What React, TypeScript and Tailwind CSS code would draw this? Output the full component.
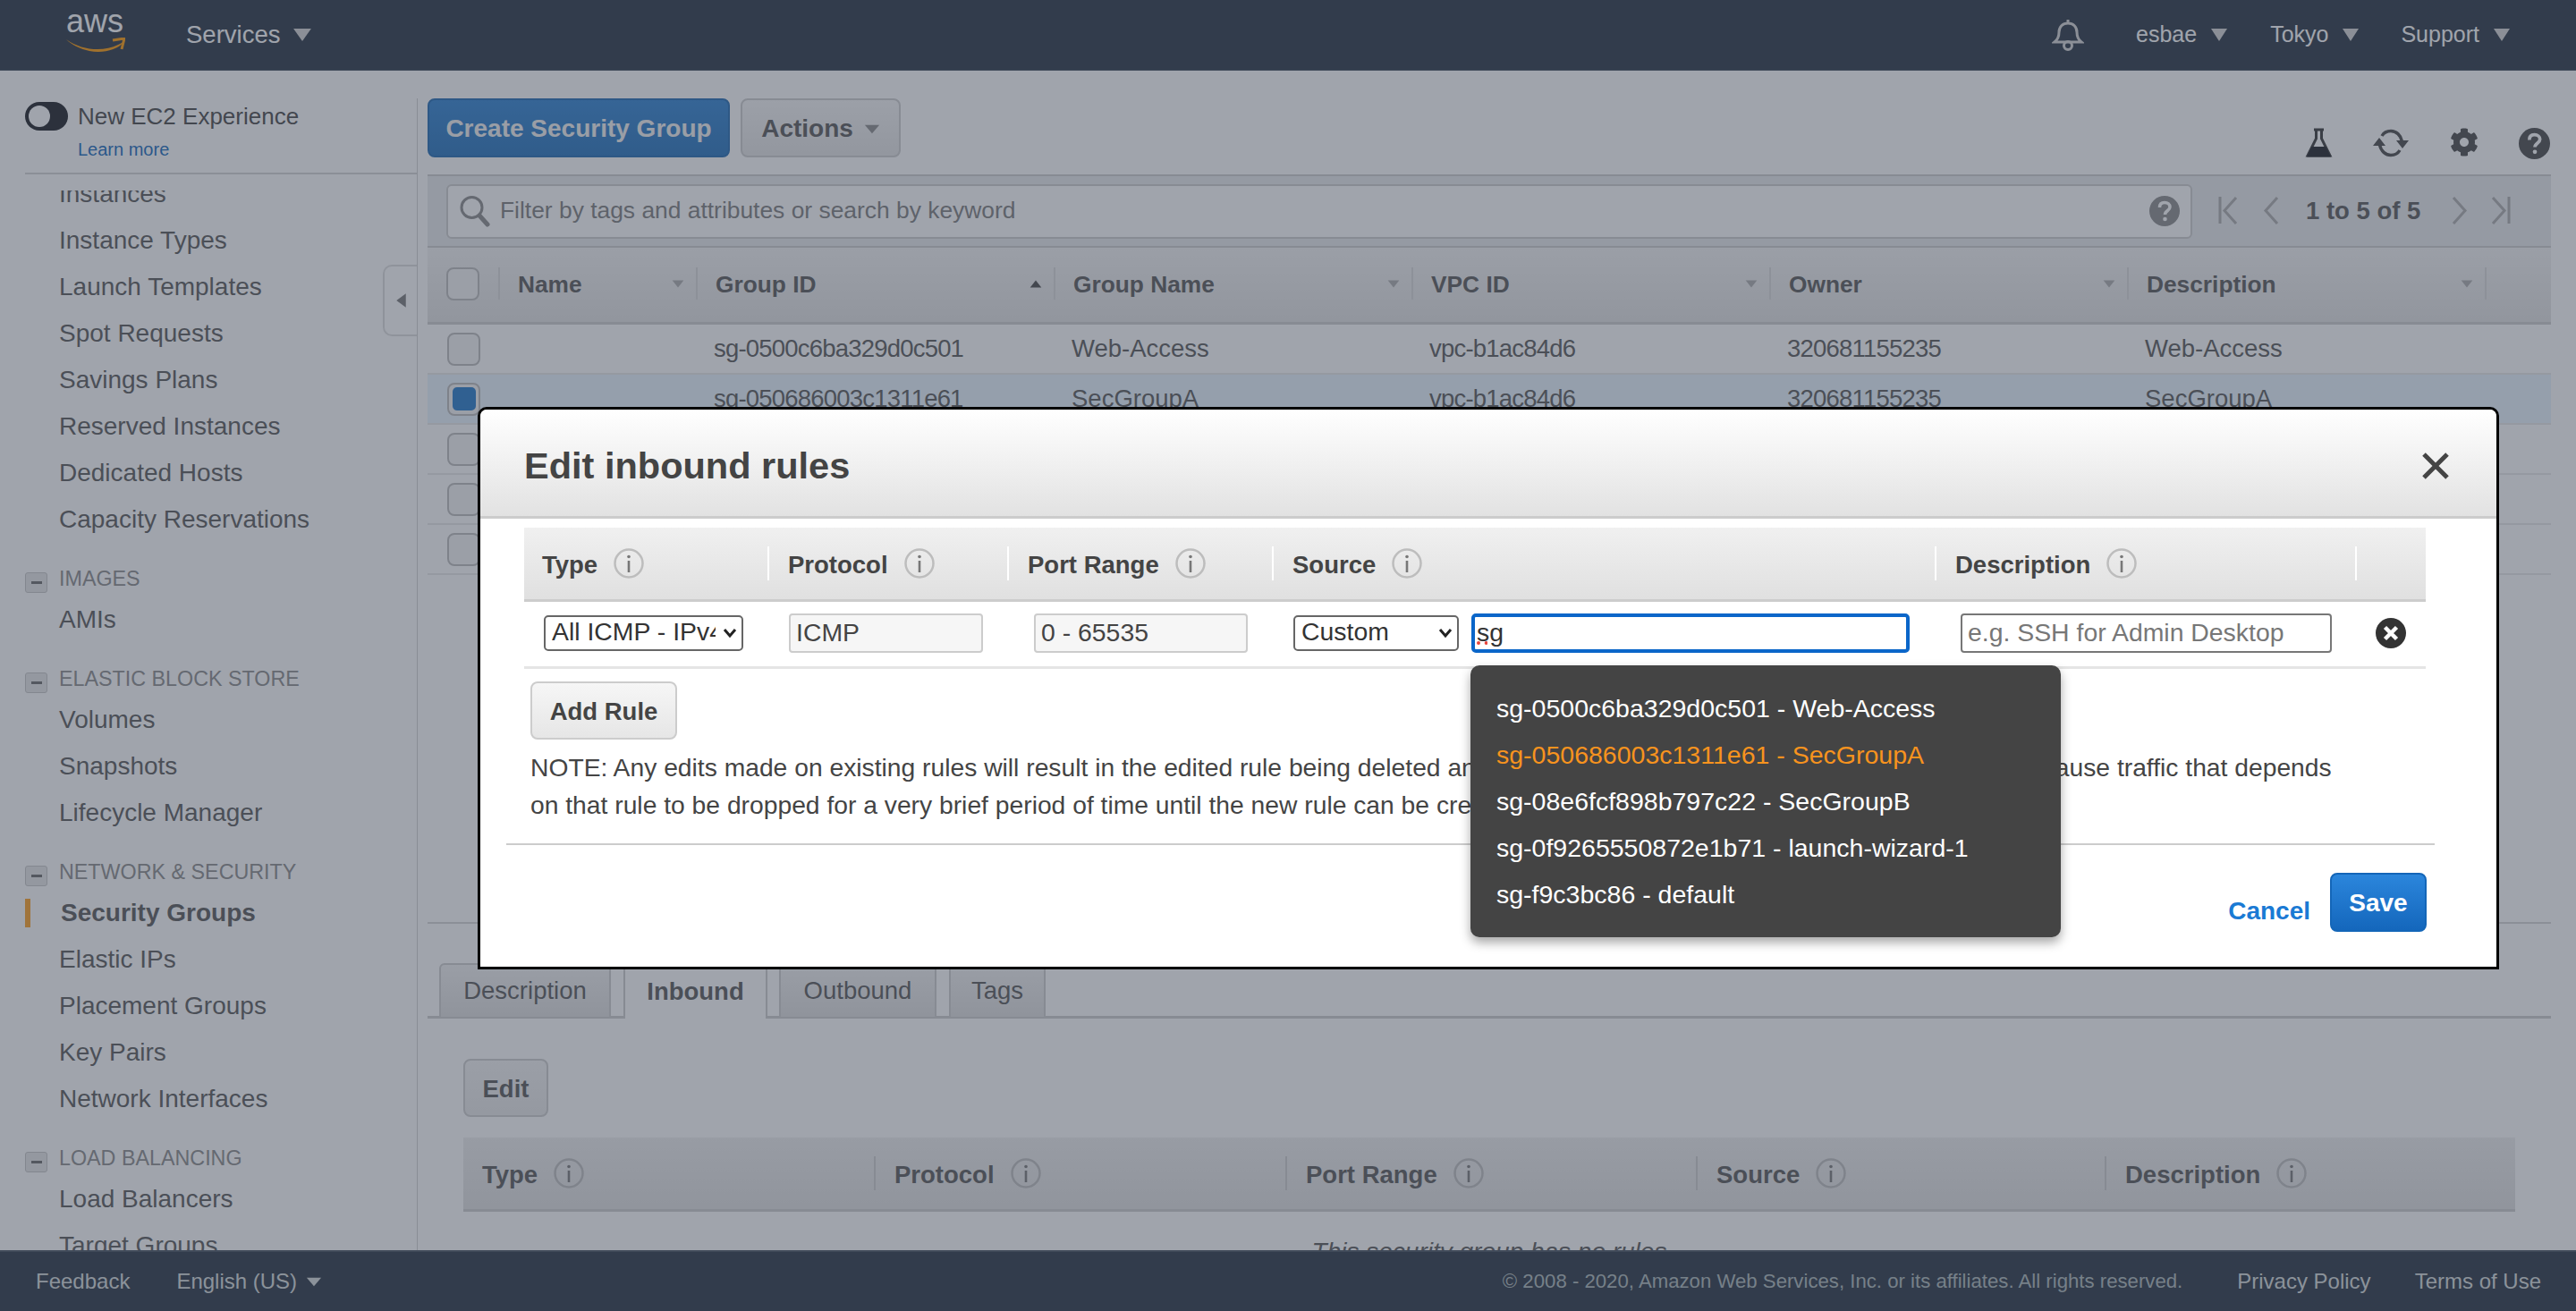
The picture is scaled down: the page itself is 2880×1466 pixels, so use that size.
import React from "react";
import { FaCog } from "react-icons/fa";

const Tri = ({ className = "", up = false }: { className?: string; up?: boolean }) => (
  <svg viewBox="0 0 20 16" className={className} fill="currentColor" preserveAspectRatio="none">
    <path d={up ? "M10 1 L19 15 H1 Z" : "M1 1 H19 L10 15 Z"} />
  </svg>
);

const Info = () => (
  <svg width="34" height="34" viewBox="0 0 34 34" className="shrink-0">
    <circle cx="17" cy="17" r="15.5" fill="none" stroke="#bdbdbd" strokeWidth="2.5" />
    <circle cx="17" cy="9.5" r="1.8" fill="#777" />
    <rect x="15.7" y="14" width="2.6" height="13" fill="#777" />
  </svg>
);

const Help = ({ size, fill }: { size: number; fill: string }) => (
  <svg width={size} height={size} viewBox="0 0 34 34">
    <circle cx="17" cy="17" r="17" fill={fill} />
    <path d="M11.5 13 C11.5 9 14 7.5 17 7.5 C20.5 7.5 23 9.5 23 12.5 C23 16.5 17.5 16.5 17.5 21" fill="none" stroke="#fff" strokeWidth="3.6" />
    <circle cx="17.5" cy="26" r="2.3" fill="#fff" />
  </svg>
);

const Chevron = () => (
  <svg width="16" height="12" viewBox="0 0 16 12" className="absolute right-[7px] top-[14px] pointer-events-none" fill="none" stroke="#222" strokeWidth="3">
    <path d="M2 2 L8 9 L14 2" />
  </svg>
);

const Check = ({ checked = false }: { checked?: boolean }) => (
  <div className="w-[37px] h-[37px] rounded-[8px] border-2 border-[#bbb] bg-[#f4f4f4] flex items-center justify-center">
    {checked && <div className="w-[26px] h-[26px] rounded-[5px] bg-[#1f76c8]" />}
  </div>
);

const sections = [
  { title: "IMAGES", items: ["AMIs"] },
  { title: "ELASTIC BLOCK STORE", items: ["Volumes", "Snapshots", "Lifecycle Manager"] },
  { title: "NETWORK & SECURITY", items: ["Security Groups", "Elastic IPs", "Placement Groups", "Key Pairs", "Network Interfaces"] },
  { title: "LOAD BALANCING", items: ["Load Balancers", "Target Groups"] },
];

const rows = [
  { id: "sg-0500c6ba329d0c501", name: "Web-Access" },
  { id: "sg-050686003c1311e61", name: "SecGroupA", selected: true },
  { id: "sg-08e6fcf898b797c22", name: "SecGroupB" },
  { id: "sg-0f9265550872e1b71", name: "launch-wizard-1" },
  { id: "sg-f9c3bc86", name: "default" },
];

const Sidebar = () => (
  <aside className="w-[466px] shrink-0 relative flex flex-col overflow-hidden">
    <div className="ml-[28px] h-[116px] shrink-0 border-b-2 border-[#d5d5d5]">
      <div className="flex items-center mt-[35px]">
        <div className="w-[48px] h-[32px] rounded-full bg-[#16191f] flex items-center pl-[4px]">
          <div className="w-[24px] h-[24px] rounded-full bg-white" />
        </div>
        <span className="ml-[11px] text-[26px] leading-[32px] text-[#444]">New EC2 Experience</span>
      </div>
      <div className="ml-[59px] mt-[7px] text-[20px] leading-[28px] text-[#1166bb]">Learn more</div>
    </div>
    {/* list scrolled a little: first row is cut by the top edge */}
    <div className="mt-[18px] flex-1 min-h-0 overflow-hidden text-[28px] text-[#555]">
      <div className="mt-[-22px]">
        {["Instances", "Instance Types", "Launch Templates", "Spot Requests", "Savings Plans", "Reserved Instances", "Dedicated Hosts", "Capacity Reservations"].map((t) => (
          <div key={t} className="h-[52px] pl-[66px] flex items-center">{t}</div>
        ))}
        {sections.map((s) => (
          <div key={s.title} className="mt-[20px]">
            <div className="h-[40px] flex items-center pl-[28px]">
              <div className="w-[25px] h-[23px] mt-[8px] rounded-[3px] border border-[#c4c4c4] bg-[#e6e6e6] flex items-center justify-center">
                <div className="w-[12px] h-[3px] bg-[#666]" />
              </div>
              <span className="ml-[13px] text-[23.3px] text-[#888]">{s.title}</span>
            </div>
            {s.items.map((t) =>
              t === "Security Groups" ? (
                <div key={t} className="h-[52px] flex items-center pl-[28px]">
                  <div className="w-[6px] h-[32px] bg-[#ff9f1c]" />
                  <span className="ml-[34px] font-bold">{t}</span>
                </div>
              ) : (
                <div key={t} className="h-[52px] pl-[66px] flex items-center">{t}</div>
              )
            )}
          </div>
        ))}
      </div>
    </div>
    <div className="absolute left-[428px] top-[217px] w-[38px] h-[80px] rounded-l-[10px] border-2 border-r-0 border-[#ddd] bg-white flex items-center justify-center">
      <Tri up className="w-[17px] h-[12px] -rotate-90 text-[#777]" />
    </div>
  </aside>
);

const colHead = ["Name", "Group ID", "Group Name", "VPC ID", "Owner", "Description"];

const SgTable = () => (
  <div>
    <div className="h-[86px] grid grid-cols-[79px_221px_400px_400px_400px_400px_400px_74px] items-center border-b-[3px] border-[#ccc] bg-gradient-to-b from-[#f4f4f4] to-[#e2e2e2]">
      <div className="pl-[21px] mt-[-3px]"><Check /></div>
      {colHead.map((c) => (
        <div key={c} className="h-[36px] mt-[-3px] border-l-2 border-[#d8d8d8] pl-[20px] pr-[13px] flex items-center justify-between text-[26.3px] font-bold text-[#555]">
          <span className="pt-[3px]">{c}</span>
          {c === "Group ID" ? <Tri up className="w-[14px] h-[9px] text-[#444]" /> : <Tri className="w-[14px] h-[9px] text-[#aaa]" />}
        </div>
      ))}
      <div className="h-[36px] mt-[-3px] border-l-2 border-[#d8d8d8]" />
    </div>
    {rows.map((r) => (
      <div key={r.id} className={`h-[56px] grid grid-cols-[79px_221px_400px_400px_400px_400px_400px_74px] items-center border-b-2 border-[#e8e8e8] text-[27.5px] text-[#555] ${r.selected ? "bg-[#e9f5ff]" : ""}`}>
        <div className="pl-[22px]"><Check checked={r.selected} /></div>
        <div />
        <div className="pl-[20px] tracking-[-0.8px]">{r.id}</div>
        <div className="pl-[20px]">{r.id === "sg-f9c3bc86" ? "" : r.name}</div>
        <div className="pl-[20px] tracking-[-0.8px]">vpc-b1ac84d6</div>
        <div className="pl-[20px] tracking-[-0.8px]">320681155235</div>
        <div className="pl-[20px]">{r.name}</div>
        <div />
      </div>
    ))}
  </div>
);

const MainPane = () => (
  <main className="flex-1 min-w-0 ml-[11px] mr-[28px] overflow-hidden">
    <div className="pt-[31px] h-[116px] flex items-start">
      <button className="w-[338px] h-[66px] rounded-[8px] border-2 border-[#1a66b0] bg-gradient-to-b from-[#2a80d2] to-[#1f6fbb] text-[28px] font-bold text-[#f2f2f2] pt-[2px]">Create Security Group</button>
      <button className="ml-[12px] w-[179px] h-[66px] rounded-[8px] border-2 border-[#ccc] bg-gradient-to-b from-[#f6f6f6] to-[#e4e4e4] text-[28px] font-bold text-[#555] flex items-center justify-center gap-[12px] pt-[2px]">
        Actions <Tri className="w-[18px] h-[11px] text-[#888]" />
      </button>
      <div className="ml-auto mt-[33px] flex items-start pr-[1px]">
        <svg width="31" height="34" viewBox="0 0 31 34">
          <path d="M10 2 H21 M12.5 2 V12 L3 31 H28 L18.5 12 V2" fill="none" stroke="#333" strokeWidth="3" />
          <path d="M7.5 21 H23.5 L29 32.5 H2 Z" fill="#16191f" />
        </svg>
        <svg width="42" height="34" viewBox="0 0 42 34" className="ml-[44px]" fill="none" stroke="#444" strokeWidth="3.5">
          <path d="M33.5 15 C32 8 27 3.5 21 3.5 C16.5 3.5 13 5.5 11 9" />
          <path d="M8.5 19 C10 26 15 30.5 21 30.5 C25.5 30.5 29 28.5 31 25" />
          <path d="M1 20 H15 L8 11 Z M27 14 H41 L34 23 Z" fill="#444" stroke="none" />
        </svg>
        <FaCog className="ml-[45px] text-[#444]" size={32} />
        <div className="ml-[45px]"><Help size={35} fill="#444" /></div>
      </div>
    </div>
    <div className="h-[82px] border-y-2 border-[#ccc] bg-[#e9eaec] flex items-center pl-[21px]">
      <div className="w-[1952px] h-[61px] rounded-[6px] border-2 border-[#ccc] bg-white flex items-center pl-[12px] pr-[12px]">
        <svg width="36" height="36" viewBox="0 0 36 36">
          <circle cx="14.5" cy="14" r="11.5" fill="none" stroke="#888" strokeWidth="3" />
          <path d="M23 23 L32 33" stroke="#888" strokeWidth="5" strokeLinecap="round" />
        </svg>
        <span className="ml-[10px] text-[26.4px] text-[#7a7a7a]">Filter by tags and attributes or search by keyword</span>
        <div className="ml-auto"><Help size={34} fill="#888" /></div>
      </div>
      <svg width="22" height="34" viewBox="0 0 22 34" className="ml-[29px] text-[#aaa]" fill="none" stroke="currentColor" strokeWidth="3">
        <path d="M2 1 V31 M20 2 L7 16.5 L20 31" />
      </svg>
      <svg width="18" height="34" viewBox="0 0 18 34" className="ml-[28px] text-[#aaa]" fill="none" stroke="currentColor" strokeWidth="3">
        <path d="M16 2 L3 16.5 L16 31" />
      </svg>
      <span className="ml-[30px] text-[27.5px] font-bold text-[#555] whitespace-nowrap">1 to 5 of 5</span>
      <svg width="18" height="34" viewBox="0 0 18 34" className="ml-[35px] text-[#aaa]" fill="none" stroke="currentColor" strokeWidth="3">
        <path d="M2 2 L15 16.5 L2 31" />
      </svg>
      <svg width="22" height="34" viewBox="0 0 22 34" className="ml-[26px] text-[#aaa]" fill="none" stroke="currentColor" strokeWidth="3">
        <path d="M20 1 V31 M2 2 L15 16.5 L2 31" />
      </svg>
    </div>
    <SgTable />
    <div className="mt-[388px] h-[2px] bg-[#d5d5d5]" />
    <div className="mt-[44px] h-[62px] flex items-stretch pl-[13px] border-b-[3px] border-[#ccc] text-[27.5px] text-[#555]">
      {[
        { t: "Description", w: "w-[192px]" },
        { t: "Inbound", w: "w-[161px] ml-[14px]", active: true },
        { t: "Outbound", w: "w-[176px] ml-[13px]" },
        { t: "Tags", w: "w-[108px] ml-[14px]" },
      ].map((tab) => (
        <div
          key={tab.t}
          className={`${tab.w} h-[62px] rounded-t-[6px] border-2 flex items-center justify-center ${
            tab.active ? "border-[#ccc] border-b-0 bg-white font-bold" : "border-[#ccc] bg-gradient-to-b from-[#f2f2f2] to-[#dedede]"
          }`}
        >
          {tab.t}
        </div>
      ))}
    </div>
    <div className="px-[40px]">
      <button className="mt-[45px] w-[95px] h-[65px] rounded-[8px] border-2 border-[#ccc] bg-gradient-to-b from-[#f4f4f4] to-[#e8e8e8] text-[27.5px] font-bold text-[#555] pt-[2px]">Edit</button>
      <div className="mt-[23px] h-[83px] grid grid-cols-[459px_460px_459px_457px_459px] items-center border-b-[3px] border-[#ccc] bg-gradient-to-b from-[#eeeeee] to-[#e0e0e0] text-[27.5px] font-bold text-[#555]">
        {["Type", "Protocol", "Port Range", "Source", "Description"].map((c, i) => (
          <div key={c} className={`h-[38px] flex items-center gap-[18px] pl-[21px] ${i ? "border-l-2 border-[#ccc]" : ""}`}>
            <span className="pt-[4px]">{c}</span> <Info />
          </div>
        ))}
      </div>
      <div className="mt-[24px] text-center text-[28px] italic text-[#555]">This security group has no rules</div>
    </div>
  </main>
);

const sgOptions = [
  "sg-0500c6ba329d0c501 - Web-Access",
  "sg-050686003c1311e61 - SecGroupA",
  "sg-08e6fcf898b797c22 - SecGroupB",
  "sg-0f9265550872e1b71 - launch-wizard-1",
  "sg-f9c3bc86 - default",
];

const inputCls = "h-[44px] rounded-[4px] text-[28.4px] px-[6px] text-[#444]";

const Modal = () => (
  <div className="absolute left-[534px] top-[455px] w-[2260px] h-[629px] border-[3px] border-black rounded-t-[10px] bg-white text-[#444]">
    <div className="h-[122px] rounded-t-[8px] border-b-[3px] border-[#ccc] bg-gradient-to-b from-white to-[#e2e2e2] flex items-center justify-between pl-[49px] pr-[53px]">
      <h2 className="text-[41.5px] font-bold text-[#444] pt-[8px]">Edit inbound rules</h2>
      <svg width="30" height="30" viewBox="0 0 30 30" stroke="#444" strokeWidth="5" className="mt-[6px]"><path d="M2 2 L28 28 M28 2 L2 28" /></svg>
    </div>
    <div className="ml-[49px] w-[2126px] mt-[10px]">
      <div className="h-[83px] grid grid-cols-[272px_268px_296px_741px_470px_79px] items-center border-b-[3px] border-[#ccc] bg-gradient-to-b from-[#f0f0f0] to-[#e0e0e0] text-[27.5px] font-bold text-[#444]">
        {["Type", "Protocol", "Port Range", "Source", "Description", ""].map((c, i) => (
          <div key={i} className={`h-[38px] flex items-center gap-[18px] ${i ? "border-l-2 border-white pl-[21px]" : "pl-[20px]"}`}>
            <span className="pt-[3px]">{c}</span> {c && <Info />}
          </div>
        ))}
      </div>
      <div className="h-[75px] pb-[3px] grid grid-cols-[272px_268px_296px_741px_470px_79px] items-center border-b-[3px] border-[#e5e5e5]">
        <div className="pl-[22px]">
          <div className="relative w-[223px]">
            <select defaultValue="all" className="block appearance-none w-full h-[40px] rounded-[5px] border-2 border-[#666] bg-white text-[28.4px] leading-[30px] pl-[7px] pr-[29px] pb-[4px] text-[#333]">
              <option value="all">All ICMP - IPv4</option>
            </select>
            <Chevron />
          </div>
        </div>
        <div className="pl-[24px]">
          <input readOnly value="ICMP" className={`${inputCls} w-[217px] border-2 border-[#ccc] bg-[#f6f6f6]`} />
        </div>
        <div className="pl-[30px]">
          <input readOnly value="0 - 65535" className={`${inputCls} w-[239px] border-2 border-[#ccc] bg-[#f6f6f6]`} />
        </div>
        <div className="pl-[24px] flex items-center gap-[14px]">
          <div className="relative w-[185px]">
            <select defaultValue="custom" className="block appearance-none w-full h-[40px] rounded-[5px] border-2 border-[#666] bg-white text-[28.4px] leading-[30px] pl-[7px] pr-[29px] pb-[4px] text-[#333]">
              <option value="custom">Custom</option>
            </select>
            <Chevron />
          </div>
          <div className="w-[490px] h-[44px] rounded-[5px] border-4 border-[#0b66c9] bg-white text-[28.4px] leading-[34px] pl-[2px] text-[#333]">
            <span className="underline decoration-dotted decoration-[#e8453c] decoration-[4px] underline-offset-[1px]">sg</span>
          </div>
        </div>
        <div className="pl-[29px]">
          <input readOnly placeholder="e.g. SSH for Admin Desktop" className={`${inputCls} w-[415px] border-2 border-[#777] bg-white placeholder:text-[#777]`} />
        </div>
        <div className="pl-[23px]">
          <svg width="34" height="34" viewBox="0 0 34 34">
            <circle cx="17" cy="17" r="17" fill="#333" />
            <path d="M10.5 10.5 L23.5 23.5 M23.5 10.5 L10.5 23.5" stroke="#fff" strokeWidth="4.5" />
          </svg>
        </div>
      </div>
    </div>
    <button className="ml-[56px] mt-[14px] w-[164px] h-[65px] rounded-[8px] border-2 border-[#ccc] bg-gradient-to-b from-[#f6f6f6] to-[#e6e6e6] text-[27.5px] font-bold text-[#444] pt-[2px]">Add Rule</button>
    <p className="ml-[56px] mt-[10px] text-[28.25px] leading-[42px] text-[#444] whitespace-nowrap">
      NOTE: Any edits made on existing rules will result in the edited rule being deleted and a new rule created with the new details. This will cause traffic that depends
      <br />
      on that rule to be dropped for a very brief period of time until the new rule can be created.
    </p>
    <div className="ml-[29px] mt-[22px] w-[2156px] h-[2px] bg-[#ccc]" />
    <div className="mt-[31px] mr-[78px] flex justify-end gap-[22px]">
      <button className="mt-[20px] text-[28px] font-bold text-[#1a7ad4]">Cancel</button>
      <button className="w-[108px] h-[66px] rounded-[8px] border-2 border-[#1466b8] bg-gradient-to-b from-[#2b86dc] to-[#1467bc] text-[28px] font-bold text-white pt-[1px]">Save</button>
    </div>
    <div className="absolute left-[1107px] top-[286px] w-[660px] h-[304px] rounded-[10px] bg-[#444] shadow-[0_6px_12px_rgba(0,0,0,0.35)] pt-[22px] pl-[29px] text-[28.5px] text-white">
      {sgOptions.map((o, i) => (
        <div key={o} className={`h-[52px] flex items-center ${i === 1 ? "text-[#f7931e]" : ""}`}>{o}</div>
      ))}
    </div>
  </div>
);

export default function App() {
  return (
    <div className="relative w-[2880px] h-[1466px] overflow-hidden flex flex-col bg-white font-['Liberation_Sans',Arial,sans-serif]">
      <header className="h-[79px] shrink-0 bg-[#232f3e] border-b border-[#3a4654] flex items-center text-[27.5px] text-white">
        <div className="ml-[74px] w-[64px] h-[44px] relative">
          <span className="absolute left-0 top-[-15px] text-[36px] leading-[44px] text-white">aws</span>
          <svg width="66" height="18" viewBox="0 0 66 18" className="absolute left-0 top-[25px]">
            <path d="M0 2 C18 15 42 16 58 8 L64 5 C58 14 40 18 26 15 C16 13 6 8 0 2 Z" fill="#ff9900" />
            <path d="M52 3 L65 1 L62 13" fill="none" stroke="#ff9900" strokeWidth="3" />
          </svg>
        </div>
        <span className="ml-[70px]">Services</span>
        <Tri className="ml-[14px] w-[22px] h-[16px] text-[#d5d5d5]" />
        <svg width="36" height="36" viewBox="0 0 36 36" className="ml-auto mr-[58px]" fill="none" stroke="#d5d5d5" strokeWidth="3">
          <path d="M18 1 V5 M3 26 C8 22 8 18 8 15 C8 9 12 5 18 5 C24 5 28 9 28 15 C28 18 28 22 33 26 Z" />
          <circle cx="18" cy="30" r="4.5" />
        </svg>
        <span className="text-[25px]">esbae</span>
        <Tri className="ml-[15px] w-[20px] h-[16px] text-[#d5d5d5]" />
        <span className="ml-[47px] text-[25px]">Tokyo</span>
        <Tri className="ml-[15px] w-[20px] h-[16px] text-[#d5d5d5]" />
        <span className="ml-[46px] text-[25px]">Support</span>
        <Tri className="ml-[15px] mr-[73px] w-[20px] h-[16px] text-[#d5d5d5]" />
      </header>
      <div className="flex-1 min-h-0 flex overflow-hidden">
        <Sidebar />
        <div className="mt-[31px] w-[1px] shrink-0 bg-[#d0d0d0]" />
        <MainPane />
      </div>
      <footer className="h-[68px] shrink-0 bg-[#232f3e] border-t-2 border-[#3f4b59] flex items-center text-[24px] text-[#d5dbdb]">
        <span className="ml-[40px]">Feedback</span>
        <span className="ml-[52px]">English (US)</span>
        <Tri className="ml-[10px] w-[18px] h-[11px]" />
        <span className="ml-auto text-[22.2px] text-[#aab7b8]">© 2008 - 2020, Amazon Web Services, Inc. or its affiliates. All rights reserved.</span>
        <span className="ml-[61px]">Privacy Policy</span>
        <span className="ml-[49px] mr-[39px]">Terms of Use</span>
      </footer>
      <div className="absolute inset-0 bg-[#414959]/50" />
      <Modal />
    </div>
  );
}
